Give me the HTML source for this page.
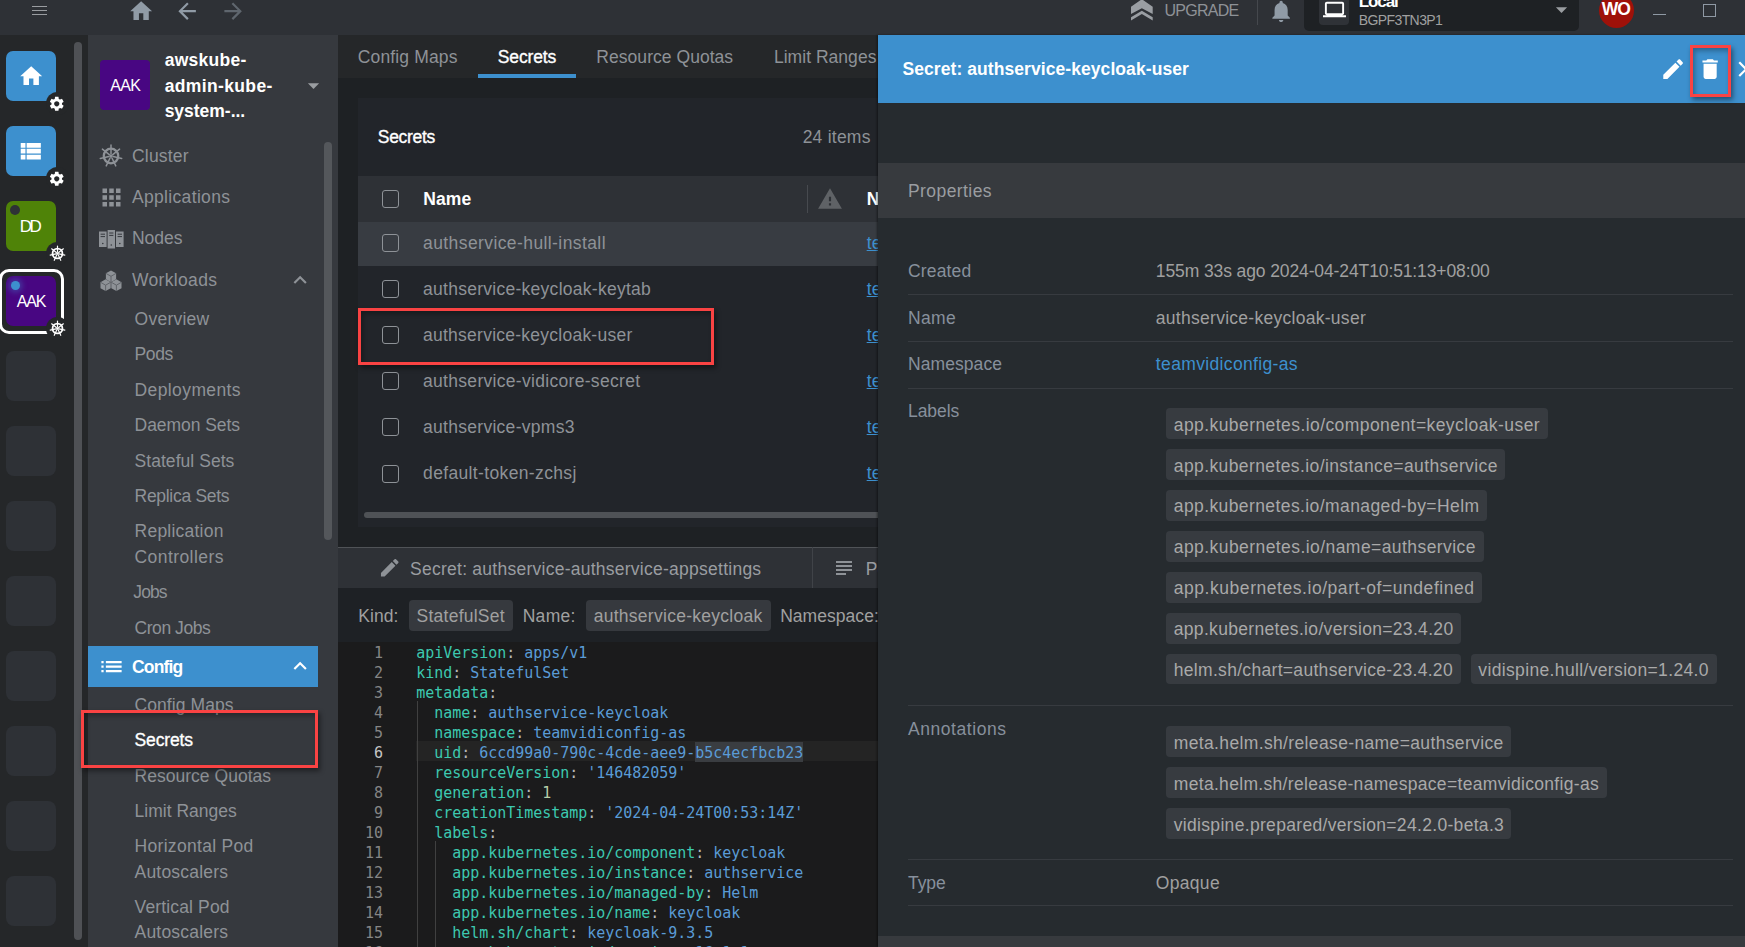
<!DOCTYPE html>
<html lang="en"><head><meta charset="utf-8"><title>Lens</title><style>
*{box-sizing:border-box;margin:0;padding:0}
html,body{width:1745px;height:947px;overflow:hidden;background:#1e2124}
body{position:relative;font-family:"Liberation Sans", sans-serif;font-size:17.5px;color:#8e9297}
.a{position:absolute;display:block}
.t{position:absolute;white-space:pre;display:block}
.m{font-family:"DejaVu Sans Mono", "Liberation Mono", monospace}
.box{position:absolute;overflow:hidden}
.cb{position:absolute;width:17px;height:18px;border:1.5px solid #8e9297;border-radius:3px}
.red{position:absolute;border:3px solid #fa4343;box-shadow:2px 3px 5px rgba(0,0,0,.45), inset 2px 3px 5px rgba(0,0,0,.3)}
.badge{position:absolute;height:30px;background:#373b40;border-radius:4px}
.hr{position:absolute;height:1px;background:#34383d}
.cell{position:absolute;left:6px;width:50px;height:50px;border-radius:7px;background:#2e3136}
</style></head><body><div class="a" style="left:0px;top:0px;width:1745px;height:35px;background:#2e3136;overflow:hidden"><div class="a" style="left:32px;top:5.6px;width:15px;height:1.4px;background:#9a9da1;"></div><div class="a" style="left:32px;top:9.9px;width:15px;height:1.4px;background:#9a9da1;"></div><div class="a" style="left:32px;top:14.1px;width:15px;height:1.4px;background:#9a9da1;"></div><svg class="a" style="left:127.8px;top:-2.3px;" width="26.25" height="26.25" viewBox="0 0 24 24"><path fill="#909ba6" d="M10 20v-6h4v6h5v-8h3L12 3 2 12h3v8z"/></svg><svg class="a" style="left:173.8px;top:-1.7px;" width="26.25" height="26.25" viewBox="0 0 24 24"><path fill="#909ba6" d="M20 11H7.83l5.59-5.59L12 4l-8 8 8 8 1.41-1.41L7.83 13H20v-2z"/></svg><svg class="a" style="left:219.9px;top:-1.7px;" width="26.25" height="26.25" viewBox="0 0 24 24"><path fill="#5f666e" d="M12 4l-1.41 1.41L16.17 11H4v2h12.17l-5.58 5.59L12 20l8-8z"/></svg><svg class="a" style="left:1131.3px;top:0" width="22" height="22" viewBox="0 0 22 22"><path d="M10.85 -0.8L21.7 6.7V13.9L10.85 8.3L0 13.9V6.7Z" fill="#9a9ea3"/><path d="M10.85 10.8L21.7 17.2V20.6L10.85 14L0 20.6V17.2Z" fill="#9a9ea3"/></svg><span class="t" style="left:1164.48px;top:-0.40px;font-size:16px;line-height:22px;color:#8e9297;letter-spacing:-0.728px;">UPGRADE</span><div class="a" style="left:1257px;top:0px;width:1px;height:25px;background:#45484d;"></div><svg class="a" style="left:1267.8px;top:-1.8px;" width="26.25" height="26.25" viewBox="0 0 24 24"><path fill="#909ba6" d="M12 22c1.1 0 2-.9 2-2h-4c0 1.1.89 2 2 2zm6-6v-5c0-3.07-1.64-5.64-4.5-6.32V4c0-.83-.67-1.5-1.5-1.5s-1.5.67-1.5 1.5v.68C7.63 5.36 6 7.92 6 11v5l-2 2v1h16v-1l-2-2z"/></svg><div class="a" style="left:1304px;top:-6px;width:274.7px;height:36.5px;background:#1e2124;border-radius:5px"></div><div class="a" style="left:1319px;top:-6px;width:30px;height:30.7px;background:#2f3237;border-radius:4px"></div><svg class="a" style="left:1323px;top:-2.5px;" width="23" height="23" viewBox="0 0 24 24"><path fill="#ffffff" d="M20 18c1.1 0 1.99-.9 1.99-2L22 6c0-1.1-.9-2-2-2H4c-1.1 0-2 .9-2 2v10c0 1.1.9 2 2 2H0v2h24v-2h-4zM4 6h16v10H4V6z"/></svg><span class="t" style="left:1358.66px;top:-10.00px;font-size:17px;line-height:24px;color:#fff;font-weight:700;letter-spacing:-1.059px;">Local</span><span class="t" style="left:1358.72px;top:10.00px;font-size:14px;line-height:20px;color:#a0a0a0;letter-spacing:-0.594px;">BGPF3TN3P1</span><svg class="a" style="left:1547.9px;top:-4px;" width="27" height="27" viewBox="0 0 24 24"><path fill="#9a9da1" d="M7 10l5 5 5-5z"/></svg><div class="a" style="left:1599px;top:-7.5px;width:35px;height:35px;background:#9f1109;border-radius:50%"></div><span class="t" style="left:1601.65px;top:-2.70px;font-size:17.5px;line-height:24px;color:#fff;font-weight:700;letter-spacing:-0.966px;">WO</span><div class="a" style="left:1653px;top:13.9px;width:13.2px;height:1.3px;background:#8f99a4;"></div><div class="a" style="left:1702.6px;top:4.2px;width:13.6px;height:12.8px;background:transparent;border:1.6px solid #8f99a4"></div></div><div class="a" style="left:0px;top:35px;width:88px;height:912px;background:#252729;overflow:hidden"><div class="a" style="left:6px;top:16px;width:50px;height:50px;background:#3d90ce;border-radius:7px"></div><svg class="a" style="left:17.7px;top:27.6px;" width="26.4" height="26.4" viewBox="0 0 24 24"><path fill="#fff" d="M10 20v-6h4v6h5v-8h3L12 3 2 12h3v8z"/></svg><div class="a" style="left:45.5px;top:57.0px;width:23px;height:23px;background:#252729;border-radius:50%"></div><svg class="a" style="left:48.25px;top:59.75px;" width="17.5" height="17.5" viewBox="0 0 24 24"><path fill="#fff" d="M19.14 12.94c.04-.3.06-.61.06-.94 0-.32-.02-.64-.07-.94l2.03-1.58c.18-.14.23-.41.12-.61l-1.92-3.32c-.12-.22-.37-.29-.59-.22l-2.39.96c-.5-.38-1.03-.7-1.62-.94l-.36-2.54c-.04-.24-.24-.41-.48-.41h-3.84c-.24 0-.43.17-.47.41l-.36 2.54c-.59.24-1.13.57-1.62.94l-2.39-.96c-.22-.08-.47 0-.59.22L2.74 8.87c-.12.21-.08.47.12.61l2.03 1.58c-.05.3-.09.63-.09.94s.02.64.07.94l-2.03 1.58c-.18.14-.23.41-.12.61l1.92 3.32c.12.22.37.29.59.22l2.39-.96c.5.38 1.03.7 1.62.94l.36 2.54c.05.24.24.41.48.41h3.84c.24 0 .44-.17.47-.41l.36-2.54c.59-.24 1.13-.56 1.62-.94l2.39.96c.22.08.47 0 .59-.22l1.92-3.32c.12-.22.07-.47-.12-.61l-2.01-1.58zM12 15.6c-1.98 0-3.6-1.62-3.6-3.6s1.62-3.6 3.6-3.6 3.6 1.62 3.6 3.6-1.62 3.6-3.6 3.6z"/></svg><div class="a" style="left:6px;top:91px;width:50px;height:50px;background:#3d90ce;border-radius:7px"></div><svg class="a" style="left:16.06px;top:101.80000000000001px;" width="28.4" height="28.4" viewBox="0 0 24 24"><path fill="#fff" d="M4 14h4v-4H4v4zm0 5h4v-4H4v4zM4 9h4V5H4v4zm5 5h12v-4H9v4zm0 5h12v-4H9v4zM9 5v4h12V5H9z"/></svg><div class="a" style="left:45.5px;top:132.0px;width:23px;height:23px;background:#252729;border-radius:50%"></div><svg class="a" style="left:48.25px;top:134.75px;" width="17.5" height="17.5" viewBox="0 0 24 24"><path fill="#fff" d="M19.14 12.94c.04-.3.06-.61.06-.94 0-.32-.02-.64-.07-.94l2.03-1.58c.18-.14.23-.41.12-.61l-1.92-3.32c-.12-.22-.37-.29-.59-.22l-2.39.96c-.5-.38-1.03-.7-1.62-.94l-.36-2.54c-.04-.24-.24-.41-.48-.41h-3.84c-.24 0-.43.17-.47.41l-.36 2.54c-.59.24-1.13.57-1.62.94l-2.39-.96c-.22-.08-.47 0-.59.22L2.74 8.87c-.12.21-.08.47.12.61l2.03 1.58c-.05.3-.09.63-.09.94s.02.64.07.94l-2.03 1.58c-.18.14-.23.41-.12.61l1.92 3.32c.12.22.37.29.59.22l2.39-.96c.5.38 1.03.7 1.62.94l.36 2.54c.05.24.24.41.48.41h3.84c.24 0 .44-.17.47-.41l.36-2.54c.59-.24 1.13-.56 1.62-.94l2.39.96c.22.08.47 0 .59-.22l1.92-3.32c.12-.22.07-.47-.12-.61l-2.01-1.58zM12 15.6c-1.98 0-3.6-1.62-3.6-3.6s1.62-3.6 3.6-3.6 3.6 1.62 3.6 3.6-1.62 3.6-3.6 3.6z"/></svg><div class="a" style="left:6px;top:166px;width:50px;height:50px;background:#4f8308;border-radius:7px"></div><div class="a" style="left:10px;top:170px;width:10px;height:10px;background:#2e3136;border-radius:50%"></div><span class="t" style="left:19.66px;top:179.50px;font-size:17px;line-height:24px;color:#fff;letter-spacing:-2.392px;">DD</span><div class="a" style="left:45.5px;top:207.0px;width:23px;height:23px;background:#252729;border-radius:50%"></div><svg class="a" style="left:47.5px;top:209.0px" width="19.0" height="19.0" viewBox="-9.5 -9.5 19.0 19.0" fill="none" stroke="#fff" stroke-width="1.2" stroke-linecap="round"><circle r="4.95" stroke-width="1.80"/><circle r="1.20" fill="#fff" stroke="none"/><path d="M0.00 -1.50L0.00 -7.50"/><path d="M1.17 -0.94L5.86 -4.68"/><path d="M1.46 0.33L7.31 1.67"/><path d="M0.65 1.35L3.25 6.76"/><path d="M-0.65 1.35L-3.25 6.76"/><path d="M-1.46 0.33L-7.31 1.67"/><path d="M-1.17 -0.94L-5.86 -4.68"/></svg><div class="a" style="left:-1.5px;top:233.5px;width:65.5px;height:65.5px;background:transparent;border:3.5px solid #fff;border-radius:10px"></div><div class="a" style="left:6px;top:241px;width:50px;height:50px;background:#480682;border-radius:7px"></div><div class="a" style="left:10.5px;top:245.5px;width:9px;height:9px;background:#3d90ce;border-radius:50%;box-shadow:0 0 6px 2px rgba(61,144,206,.45)"></div><span class="t" style="left:16.68px;top:255.50px;font-size:16px;line-height:22px;color:#fff;letter-spacing:-1.178px;">AAK</span><div class="a" style="left:45.5px;top:282.0px;width:23px;height:23px;background:#252729;border-radius:50%"></div><svg class="a" style="left:47.5px;top:284.0px" width="19.0" height="19.0" viewBox="-9.5 -9.5 19.0 19.0" fill="none" stroke="#fff" stroke-width="1.2" stroke-linecap="round"><circle r="4.95" stroke-width="1.80"/><circle r="1.20" fill="#fff" stroke="none"/><path d="M0.00 -1.50L0.00 -7.50"/><path d="M1.17 -0.94L5.86 -4.68"/><path d="M1.46 0.33L7.31 1.67"/><path d="M0.65 1.35L3.25 6.76"/><path d="M-0.65 1.35L-3.25 6.76"/><path d="M-1.46 0.33L-7.31 1.67"/><path d="M-1.17 -0.94L-5.86 -4.68"/></svg><div class="a" style="left:6px;top:316px;width:50px;height:50px;background:#2e3136;border-radius:8px"></div><div class="a" style="left:6px;top:391px;width:50px;height:50px;background:#2e3136;border-radius:8px"></div><div class="a" style="left:6px;top:466px;width:50px;height:50px;background:#2e3136;border-radius:8px"></div><div class="a" style="left:6px;top:541px;width:50px;height:50px;background:#2e3136;border-radius:8px"></div><div class="a" style="left:6px;top:616px;width:50px;height:50px;background:#2e3136;border-radius:8px"></div><div class="a" style="left:6px;top:691px;width:50px;height:50px;background:#2e3136;border-radius:8px"></div><div class="a" style="left:6px;top:766px;width:50px;height:50px;background:#2e3136;border-radius:8px"></div><div class="a" style="left:6px;top:841px;width:50px;height:50px;background:#2e3136;border-radius:8px"></div><div class="a" style="left:74px;top:7px;width:8px;height:898px;background:#4f5155;border-radius:4px"></div></div><div class="a" style="left:88px;top:35px;width:250px;height:912px;background:#36393e;overflow:hidden"><div class="a" style="left:12px;top:25px;width:50px;height:50px;background:#480682;border-radius:4px"></div><span class="t" style="left:22.28px;top:39.80px;font-size:16px;line-height:22px;color:#fff;letter-spacing:-0.728px;">AAK</span><span class="t" style="left:76.65px;top:13.00px;font-size:17.5px;line-height:24px;color:#fff;font-weight:700;letter-spacing:0.261px;">awskube-</span><span class="t" style="left:76.65px;top:38.50px;font-size:17.5px;line-height:24px;color:#fff;font-weight:700;letter-spacing:0.363px;">admin-kube-</span><span class="t" style="left:76.65px;top:64.00px;font-size:17.5px;line-height:24px;color:#fff;font-weight:700;letter-spacing:-0.018px;">system-...</span><svg class="a" style="left:211.60000000000002px;top:36.8px;" width="27" height="27" viewBox="0 0 24 24"><path fill="#9a9da1" d="M7 10l5 5 5-5z"/></svg><svg class="a" style="left:10px;top:108px" width="26" height="26" viewBox="-13 -13 26 26" fill="none" stroke="#8e9297" stroke-width="1.5" stroke-linecap="round"><circle r="7.26" stroke-width="2.25"/><circle r="1.76" fill="#8e9297" stroke="none"/><path d="M0.00 -2.20L0.00 -11.00"/><path d="M1.72 -1.37L8.60 -6.86"/><path d="M2.14 0.49L10.72 2.45"/><path d="M0.95 1.98L4.77 9.91"/><path d="M-0.95 1.98L-4.77 9.91"/><path d="M-2.14 0.49L-10.72 2.45"/><path d="M-1.72 -1.37L-8.60 -6.86"/></svg><span class="t" style="left:43.95px;top:109.00px;font-size:17.5px;line-height:24px;color:#8e9297;letter-spacing:0.206px;">Cluster</span><svg class="a" style="left:9.5px;top:148.5px;" width="27" height="27" viewBox="0 0 24 24"><path fill="#8e9297" d="M4 8h4V4H4v4zm6 12h4v-4h-4v4zm-6 0h4v-4H4v4zm0-6h4v-4H4v4zm6 0h4v-4h-4v4zm6-10v4h4V4h-4zm-6 4h4V4h-4v4zm6 6h4v-4h-4v4zm0 6h4v-4h-4v4z"/></svg><span class="t" style="left:43.95px;top:150.00px;font-size:17.5px;line-height:24px;color:#8e9297;letter-spacing:0.336px;">Applications</span><svg class="a" style="left:11px;top:194px" width="25" height="21" viewBox="0 0 25 21"><rect x="0" y="2.5" width="7.6" height="15.5" fill="#8e9297"/><rect x="8.6" y="1" width="7.4" height="18.5" fill="#8e9297"/><rect x="17" y="2.5" width="7.6" height="15.5" fill="#8e9297"/><path d="M1.6 5.2h4.4M1.6 7.6h4.4M10.2 4h4.2M10.2 6.4h4.2M18.6 5.2h4.4M18.6 7.6h4.4" stroke="#36393e" stroke-width="1"/><circle cx="3.8" cy="14.5" r=".8" fill="#36393e"/><circle cx="12.3" cy="16" r=".8" fill="#36393e"/><circle cx="20.8" cy="14.5" r=".8" fill="#36393e"/></svg><span class="t" style="left:43.95px;top:191.40px;font-size:17.5px;line-height:24px;color:#8e9297;letter-spacing:0.020px;">Nodes</span><svg class="a" style="left:10px;top:233px" width="26" height="25" viewBox="0 0 26 25"><polygon points="13.00,2.40 18.11,5.35 18.11,11.25 13.00,14.20 7.89,11.25 7.89,5.35" fill="#8e9297"/><path d="M13.00 8.30L18.11 5.35M13.00 8.30L7.89 5.35M13.00 8.30L13.00 14.20" stroke="#5b5f64" stroke-width="0.9" fill="none"/><polygon points="7.60,11.30 12.71,14.25 12.71,20.15 7.60,23.10 2.49,20.15 2.49,14.25" fill="#8e9297"/><path d="M7.60 17.20L12.71 14.25M7.60 17.20L2.49 14.25M7.60 17.20L7.60 23.10" stroke="#5b5f64" stroke-width="0.9" fill="none"/><polygon points="18.40,11.30 23.51,14.25 23.51,20.15 18.40,23.10 13.29,20.15 13.29,14.25" fill="#8e9297"/><path d="M18.40 17.20L23.51 14.25M18.40 17.20L13.29 14.25M18.40 17.20L18.40 23.10" stroke="#5b5f64" stroke-width="0.9" fill="none"/></svg><span class="t" style="left:43.95px;top:232.60px;font-size:17.5px;line-height:24px;color:#8e9297;letter-spacing:0.339px;">Workloads</span><svg class="a" style="left:198.89999999999998px;top:231.89999999999998px;" width="26.25" height="26.25" viewBox="0 0 24 24"><path fill="#8e9297" d="M7.41 15.41L12 10.83l4.59 4.58L18 14l-6-6-6 6z"/></svg><span class="t" style="left:46.55px;top:271.90px;font-size:17.5px;line-height:24px;color:#8e9297;letter-spacing:0.248px;">Overview</span><span class="t" style="left:46.55px;top:307.30px;font-size:17.5px;line-height:24px;color:#8e9297;letter-spacing:-0.405px;">Pods</span><span class="t" style="left:46.55px;top:342.70px;font-size:17.5px;line-height:24px;color:#8e9297;letter-spacing:0.393px;">Deployments</span><span class="t" style="left:46.55px;top:378.10px;font-size:17.5px;line-height:24px;color:#8e9297;letter-spacing:-0.046px;">Daemon Sets</span><span class="t" style="left:46.55px;top:413.60px;font-size:17.5px;line-height:24px;color:#8e9297;letter-spacing:0.045px;">Stateful Sets</span><span class="t" style="left:46.55px;top:449.00px;font-size:17.5px;line-height:24px;color:#8e9297;letter-spacing:-0.298px;">Replica Sets</span><span class="t" style="left:46.55px;top:484.40px;font-size:17.5px;line-height:24px;color:#8e9297;letter-spacing:0.230px;">Replication</span><span class="t" style="left:46.55px;top:509.60px;font-size:17.5px;line-height:24px;color:#8e9297;letter-spacing:0.425px;">Controllers</span><span class="t" style="left:45.25px;top:545.10px;font-size:17.5px;line-height:24px;color:#8e9297;letter-spacing:-0.865px;">Jobs</span><span class="t" style="left:46.55px;top:580.50px;font-size:17.5px;line-height:24px;color:#8e9297;letter-spacing:-0.449px;">Cron Jobs</span><div class="a" style="left:0px;top:611px;width:230px;height:41px;background:#3d90ce;"></div><svg class="a" style="left:9.5px;top:617.6px;" width="27" height="27" viewBox="0 0 24 24"><path fill="#fff" d="M3 13h2v-2H3v2zm0 4h2v-2H3v2zm0-8h2V7H3v2zm4 4h14v-2H7v2zm0 4h14v-2H7v2zM7 7v2h14V7H7z"/></svg><span class="t" style="left:44.05px;top:619.80px;font-size:17.5px;line-height:24px;color:#fff;font-weight:700;letter-spacing:-0.866px;">Config</span><svg class="a" style="left:198.89999999999998px;top:618.25px;" width="26.25" height="26.25" viewBox="0 0 24 24"><path fill="#fff" d="M7.41 15.41L12 10.83l4.59 4.58L18 14l-6-6-6 6z"/></svg><span class="t" style="left:46.55px;top:657.60px;font-size:17.5px;line-height:24px;color:#8e9297;letter-spacing:0.072px;">Config Maps</span><span class="t" style="left:46.55px;top:693.00px;font-size:17.5px;line-height:24px;color:#fff;letter-spacing:-0.142px;-webkit-text-stroke:.35px #fff;">Secrets</span><span class="t" style="left:46.55px;top:728.50px;font-size:17.5px;line-height:24px;color:#8e9297;letter-spacing:0.021px;">Resource Quotas</span><span class="t" style="left:46.55px;top:763.90px;font-size:17.5px;line-height:24px;color:#8e9297;letter-spacing:0.012px;">Limit Ranges</span><span class="t" style="left:46.55px;top:799.30px;font-size:17.5px;line-height:24px;color:#8e9297;letter-spacing:0.306px;">Horizontal Pod</span><span class="t" style="left:46.55px;top:824.50px;font-size:17.5px;line-height:24px;color:#8e9297;letter-spacing:0.194px;">Autoscalers</span><span class="t" style="left:46.55px;top:860.00px;font-size:17.5px;line-height:24px;color:#8e9297;letter-spacing:0.144px;">Vertical Pod</span><span class="t" style="left:46.55px;top:885.20px;font-size:17.5px;line-height:24px;color:#8e9297;letter-spacing:0.194px;">Autoscalers</span><div class="a" style="left:236px;top:107px;width:7.5px;height:398px;background:#54575b;border-radius:4px"></div></div><div class="a" style="left:338px;top:35px;width:540px;height:912px;background:#1e2124;overflow:hidden"><div class="a" style="left:0px;top:0px;width:540px;height:43px;background:#252729;"></div><span class="t" style="left:19.85px;top:9.70px;font-size:17.5px;line-height:24px;color:#8e9297;letter-spacing:0.133px;">Config Maps</span><span class="t" style="left:159.85px;top:9.70px;font-size:17.5px;line-height:24px;color:#fff;letter-spacing:-0.142px;-webkit-text-stroke:.35px #fff;">Secrets</span><span class="t" style="left:258.35px;top:9.70px;font-size:17.5px;line-height:24px;color:#8e9297;letter-spacing:0.042px;">Resource Quotas</span><span class="t" style="left:435.95px;top:9.70px;font-size:17.5px;line-height:24px;color:#8e9297;letter-spacing:0.030px;">Limit Ranges</span><div class="a" style="left:140px;top:39px;width:98px;height:4px;background:#3d90ce;"></div><div class="a" style="left:20px;top:63px;width:520px;height:429px;background:#22252a;"></div><span class="t" style="left:39.75px;top:89.50px;font-size:17.5px;line-height:24px;color:#fff;letter-spacing:-0.292px;-webkit-text-stroke:.35px #fff;">Secrets</span><span class="t" style="left:464.65px;top:89.50px;font-size:17.5px;line-height:24px;color:#8e9297;letter-spacing:0.233px;">24 items</span><div class="a" style="left:20px;top:141px;width:520px;height:46px;background:#2e3136;"></div><div class="a" style="left:20px;top:187px;width:520px;height:44px;background:#383c42;"></div><div class="cb" style="left:44px;top:155px"></div><div class="cb" style="left:44px;top:199px"></div><div class="cb" style="left:44px;top:245.10000000000002px"></div><div class="cb" style="left:44px;top:291.2px"></div><div class="cb" style="left:44px;top:337.3px"></div><div class="cb" style="left:44px;top:383.4px"></div><div class="cb" style="left:44px;top:429.5px"></div><span class="t" style="left:85.35px;top:152.00px;font-size:17.5px;line-height:24px;color:#fff;font-weight:700;letter-spacing:0.034px;">Name</span><div class="a" style="left:469px;top:150px;width:1px;height:27.5px;background:#474a4f;"></div><svg class="a" style="left:478.70000000000005px;top:150.7px;" width="26" height="26" viewBox="0 0 24 24"><path fill="#5f6266" d="M1 21h22L12 2 1 21zm12-3h-2v-2h2v2zm0-4h-2v-4h2v4z"/></svg><span class="t" style="left:528.65px;top:152.00px;font-size:17.5px;line-height:24px;color:#fff;font-weight:700;letter-spacing:0.300px;">Namespace</span><span class="t" style="left:85.05px;top:195.60px;font-size:17.5px;line-height:24px;color:#8e9297;letter-spacing:0.406px;">authservice-hull-install</span><span class="t" style="left:528.65px;top:195.60px;font-size:17.5px;line-height:24px;color:#3d90ce;letter-spacing:0.300px;text-decoration:underline;">teamvidiconfig-as</span><span class="t" style="left:85.05px;top:241.70px;font-size:17.5px;line-height:24px;color:#8e9297;letter-spacing:0.268px;">authservice-keycloak-keytab</span><span class="t" style="left:528.65px;top:241.70px;font-size:17.5px;line-height:24px;color:#3d90ce;letter-spacing:0.300px;text-decoration:underline;">teamvidiconfig-as</span><span class="t" style="left:85.05px;top:287.80px;font-size:17.5px;line-height:24px;color:#8e9297;letter-spacing:0.246px;">authservice-keycloak-user</span><span class="t" style="left:528.65px;top:287.80px;font-size:17.5px;line-height:24px;color:#3d90ce;letter-spacing:0.300px;text-decoration:underline;">teamvidiconfig-as</span><span class="t" style="left:85.05px;top:333.90px;font-size:17.5px;line-height:24px;color:#8e9297;letter-spacing:0.303px;">authservice-vidicore-secret</span><span class="t" style="left:528.65px;top:333.90px;font-size:17.5px;line-height:24px;color:#3d90ce;letter-spacing:0.300px;text-decoration:underline;">teamvidiconfig-as</span><span class="t" style="left:85.05px;top:380.00px;font-size:17.5px;line-height:24px;color:#8e9297;letter-spacing:0.281px;">authservice-vpms3</span><span class="t" style="left:528.65px;top:380.00px;font-size:17.5px;line-height:24px;color:#3d90ce;letter-spacing:0.300px;text-decoration:underline;">teamvidiconfig-as</span><span class="t" style="left:85.05px;top:426.10px;font-size:17.5px;line-height:24px;color:#8e9297;letter-spacing:0.355px;">default-token-zchsj</span><span class="t" style="left:528.65px;top:426.10px;font-size:17.5px;line-height:24px;color:#3d90ce;letter-spacing:0.300px;text-decoration:underline;">teamvidiconfig-as</span><div class="a" style="left:26px;top:477px;width:520px;height:6px;background:#4f5256;border-radius:3px"></div><div class="a" style="left:0px;top:511.6px;width:540px;height:1px;background:#505357;"></div><div class="a" style="left:0px;top:512.6px;width:540px;height:40.4px;background:#2e3136;"></div><svg class="a" style="left:39.60000000000002px;top:521.4px;" width="23.5" height="23.5" viewBox="0 0 24 24"><path fill="#8e9297" d="M3 17.25V21h3.75L17.81 9.94l-3.75-3.75L3 17.25zM20.71 7.04c.39-.39.39-1.02 0-1.41l-2.34-2.34c-.39-.39-1.02-.39-1.41 0l-1.83 1.83 3.75 3.75 1.83-1.83z"/></svg><span class="t" style="left:72.05px;top:521.50px;font-size:17.5px;line-height:24px;color:#9a9da1;letter-spacing:0.253px;">Secret: authservice-authservice-appsettings</span><div class="a" style="left:474px;top:512px;width:1px;height:41px;background:#404348;"></div><svg class="a" style="left:494.4px;top:521px;" width="24" height="24" viewBox="0 0 24 24"><path fill="#8e9297" d="M14 17H4v2h10v-2zm6-8H4v2h16V9zM4 15h16v-2H4v2zM4 5v2h16V5H4z"/></svg><span class="t" style="left:527.65px;top:521.50px;font-size:17.5px;line-height:24px;color:#9a9da1;letter-spacing:0.300px;">Pod: authservice</span><div class="a" style="left:0px;top:553px;width:540px;height:54px;background:#1e2125;"></div><span class="t" style="left:20.15px;top:568.50px;font-size:17.5px;line-height:24px;color:#a0a0a0;letter-spacing:0.096px;">Kind:</span><div class="a" style="left:71px;top:565px;width:103.8px;height:31px;background:#36393e;border-radius:4px"></div><span class="t" style="left:78.55px;top:569.00px;font-size:17.5px;line-height:24px;color:#a0a0a0;letter-spacing:0.245px;">StatefulSet</span><span class="t" style="left:184.65px;top:568.50px;font-size:17.5px;line-height:24px;color:#a0a0a0;letter-spacing:0.307px;">Name:</span><div class="a" style="left:247.79999999999995px;top:565px;width:184.8px;height:31px;background:#36393e;border-radius:4px"></div><span class="t" style="left:255.65px;top:569.00px;font-size:17.5px;line-height:24px;color:#a0a0a0;letter-spacing:0.277px;">authservice-keycloak</span><span class="t" style="left:442.15px;top:568.50px;font-size:17.5px;line-height:24px;color:#a0a0a0;letter-spacing:0.047px;">Namespace:</span><div class="a" style="left:0px;top:607px;width:540px;height:306px;background:#1b1b1c;"></div><div class="a" style="left:78px;top:706px;width:470px;height:20px;background:#242424;"></div><div class="a" style="left:357px;top:707px;width:108px;height:20px;background:#3a3d41;"></div><div class="a" style="left:79px;top:666px;width:1px;height:250px;background:#404040;"></div><div class="a" style="left:97px;top:806px;width:1px;height:110px;background:#404040;"></div><span class="t m" style="left:36.00px;top:608.00px;font-size:15px;line-height:20px;color:#858585;letter-spacing:-0.030px;">1</span><span class="t m" style="left:78.30px;top:608.00px;font-size:15px;line-height:20px;color:#3dc9b0;letter-spacing:-0.030px;">apiVersion</span><span class="t m" style="left:168.30px;top:608.00px;font-size:15px;line-height:20px;color:#b8b8b8;letter-spacing:-0.030px;">: </span><span class="t m" style="left:186.30px;top:608.00px;font-size:15px;line-height:20px;color:#5a9bd6;letter-spacing:-0.030px;">apps/v1</span><span class="t m" style="left:36.00px;top:628.00px;font-size:15px;line-height:20px;color:#858585;letter-spacing:-0.030px;">2</span><span class="t m" style="left:78.30px;top:628.00px;font-size:15px;line-height:20px;color:#3dc9b0;letter-spacing:-0.030px;">kind</span><span class="t m" style="left:114.30px;top:628.00px;font-size:15px;line-height:20px;color:#b8b8b8;letter-spacing:-0.030px;">: </span><span class="t m" style="left:132.30px;top:628.00px;font-size:15px;line-height:20px;color:#5a9bd6;letter-spacing:-0.030px;">StatefulSet</span><span class="t m" style="left:36.00px;top:648.00px;font-size:15px;line-height:20px;color:#858585;letter-spacing:-0.030px;">3</span><span class="t m" style="left:78.30px;top:648.00px;font-size:15px;line-height:20px;color:#3dc9b0;letter-spacing:-0.030px;">metadata</span><span class="t m" style="left:150.30px;top:648.00px;font-size:15px;line-height:20px;color:#b8b8b8;letter-spacing:-0.030px;">:</span><span class="t m" style="left:36.00px;top:668.00px;font-size:15px;line-height:20px;color:#858585;letter-spacing:-0.030px;">4</span><span class="t m" style="left:96.30px;top:668.00px;font-size:15px;line-height:20px;color:#3dc9b0;letter-spacing:-0.030px;">name</span><span class="t m" style="left:132.30px;top:668.00px;font-size:15px;line-height:20px;color:#b8b8b8;letter-spacing:-0.030px;">: </span><span class="t m" style="left:150.30px;top:668.00px;font-size:15px;line-height:20px;color:#5a9bd6;letter-spacing:-0.030px;">authservice-keycloak</span><span class="t m" style="left:36.00px;top:688.00px;font-size:15px;line-height:20px;color:#858585;letter-spacing:-0.030px;">5</span><span class="t m" style="left:96.30px;top:688.00px;font-size:15px;line-height:20px;color:#3dc9b0;letter-spacing:-0.030px;">namespace</span><span class="t m" style="left:177.30px;top:688.00px;font-size:15px;line-height:20px;color:#b8b8b8;letter-spacing:-0.030px;">: </span><span class="t m" style="left:195.30px;top:688.00px;font-size:15px;line-height:20px;color:#5a9bd6;letter-spacing:-0.030px;">teamvidiconfig-as</span><span class="t m" style="left:36.00px;top:708.00px;font-size:15px;line-height:20px;color:#c6c6c6;letter-spacing:-0.030px;">6</span><span class="t m" style="left:96.30px;top:708.00px;font-size:15px;line-height:20px;color:#3dc9b0;letter-spacing:-0.030px;">uid</span><span class="t m" style="left:123.30px;top:708.00px;font-size:15px;line-height:20px;color:#b8b8b8;letter-spacing:-0.030px;">: </span><span class="t m" style="left:141.30px;top:708.00px;font-size:15px;line-height:20px;color:#5a9bd6;letter-spacing:-0.030px;">6ccd99a0-790c-4cde-aee9-b5c4ecfbcb23</span><span class="t m" style="left:36.00px;top:728.00px;font-size:15px;line-height:20px;color:#858585;letter-spacing:-0.030px;">7</span><span class="t m" style="left:96.30px;top:728.00px;font-size:15px;line-height:20px;color:#3dc9b0;letter-spacing:-0.030px;">resourceVersion</span><span class="t m" style="left:231.30px;top:728.00px;font-size:15px;line-height:20px;color:#b8b8b8;letter-spacing:-0.030px;">: </span><span class="t m" style="left:249.30px;top:728.00px;font-size:15px;line-height:20px;color:#5a9bd6;letter-spacing:-0.030px;">&#x27;146482059&#x27;</span><span class="t m" style="left:36.00px;top:748.00px;font-size:15px;line-height:20px;color:#858585;letter-spacing:-0.030px;">8</span><span class="t m" style="left:96.30px;top:748.00px;font-size:15px;line-height:20px;color:#3dc9b0;letter-spacing:-0.030px;">generation</span><span class="t m" style="left:186.30px;top:748.00px;font-size:15px;line-height:20px;color:#b8b8b8;letter-spacing:-0.030px;">: </span><span class="t m" style="left:204.30px;top:748.00px;font-size:15px;line-height:20px;color:#b5cea8;letter-spacing:-0.030px;">1</span><span class="t m" style="left:36.00px;top:768.00px;font-size:15px;line-height:20px;color:#858585;letter-spacing:-0.030px;">9</span><span class="t m" style="left:96.30px;top:768.00px;font-size:15px;line-height:20px;color:#3dc9b0;letter-spacing:-0.030px;">creationTimestamp</span><span class="t m" style="left:249.30px;top:768.00px;font-size:15px;line-height:20px;color:#b8b8b8;letter-spacing:-0.030px;">: </span><span class="t m" style="left:267.30px;top:768.00px;font-size:15px;line-height:20px;color:#5a9bd6;letter-spacing:-0.030px;">&#x27;2024-04-24T00:53:14Z&#x27;</span><span class="t m" style="left:27.00px;top:788.00px;font-size:15px;line-height:20px;color:#858585;letter-spacing:-0.030px;">10</span><span class="t m" style="left:96.30px;top:788.00px;font-size:15px;line-height:20px;color:#3dc9b0;letter-spacing:-0.030px;">labels</span><span class="t m" style="left:150.30px;top:788.00px;font-size:15px;line-height:20px;color:#b8b8b8;letter-spacing:-0.030px;">:</span><span class="t m" style="left:27.00px;top:808.00px;font-size:15px;line-height:20px;color:#858585;letter-spacing:-0.030px;">11</span><span class="t m" style="left:114.30px;top:808.00px;font-size:15px;line-height:20px;color:#3dc9b0;letter-spacing:-0.030px;">app.kubernetes.io/component</span><span class="t m" style="left:357.30px;top:808.00px;font-size:15px;line-height:20px;color:#b8b8b8;letter-spacing:-0.030px;">: </span><span class="t m" style="left:375.30px;top:808.00px;font-size:15px;line-height:20px;color:#5a9bd6;letter-spacing:-0.030px;">keycloak</span><span class="t m" style="left:27.00px;top:828.00px;font-size:15px;line-height:20px;color:#858585;letter-spacing:-0.030px;">12</span><span class="t m" style="left:114.30px;top:828.00px;font-size:15px;line-height:20px;color:#3dc9b0;letter-spacing:-0.030px;">app.kubernetes.io/instance</span><span class="t m" style="left:348.30px;top:828.00px;font-size:15px;line-height:20px;color:#b8b8b8;letter-spacing:-0.030px;">: </span><span class="t m" style="left:366.30px;top:828.00px;font-size:15px;line-height:20px;color:#5a9bd6;letter-spacing:-0.030px;">authservice</span><span class="t m" style="left:27.00px;top:848.00px;font-size:15px;line-height:20px;color:#858585;letter-spacing:-0.030px;">13</span><span class="t m" style="left:114.30px;top:848.00px;font-size:15px;line-height:20px;color:#3dc9b0;letter-spacing:-0.030px;">app.kubernetes.io/managed-by</span><span class="t m" style="left:366.30px;top:848.00px;font-size:15px;line-height:20px;color:#b8b8b8;letter-spacing:-0.030px;">: </span><span class="t m" style="left:384.30px;top:848.00px;font-size:15px;line-height:20px;color:#5a9bd6;letter-spacing:-0.030px;">Helm</span><span class="t m" style="left:27.00px;top:868.00px;font-size:15px;line-height:20px;color:#858585;letter-spacing:-0.030px;">14</span><span class="t m" style="left:114.30px;top:868.00px;font-size:15px;line-height:20px;color:#3dc9b0;letter-spacing:-0.030px;">app.kubernetes.io/name</span><span class="t m" style="left:312.30px;top:868.00px;font-size:15px;line-height:20px;color:#b8b8b8;letter-spacing:-0.030px;">: </span><span class="t m" style="left:330.30px;top:868.00px;font-size:15px;line-height:20px;color:#5a9bd6;letter-spacing:-0.030px;">keycloak</span><span class="t m" style="left:27.00px;top:888.00px;font-size:15px;line-height:20px;color:#858585;letter-spacing:-0.030px;">15</span><span class="t m" style="left:114.30px;top:888.00px;font-size:15px;line-height:20px;color:#3dc9b0;letter-spacing:-0.030px;">helm.sh/chart</span><span class="t m" style="left:231.30px;top:888.00px;font-size:15px;line-height:20px;color:#b8b8b8;letter-spacing:-0.030px;">: </span><span class="t m" style="left:249.30px;top:888.00px;font-size:15px;line-height:20px;color:#5a9bd6;letter-spacing:-0.030px;">keycloak-9.3.5</span><span class="t m" style="left:27.00px;top:908.00px;font-size:15px;line-height:20px;color:#858585;letter-spacing:-0.030px;">16</span><span class="t m" style="left:114.30px;top:908.00px;font-size:15px;line-height:20px;color:#3dc9b0;letter-spacing:-0.030px;">app.kubernetes.io/version</span><span class="t m" style="left:339.30px;top:908.00px;font-size:15px;line-height:20px;color:#b8b8b8;letter-spacing:-0.030px;">: </span><span class="t m" style="left:357.30px;top:908.00px;font-size:15px;line-height:20px;color:#5a9bd6;letter-spacing:-0.030px;">16.1.1</span></div><div class="a" style="left:878px;top:35px;width:867px;height:912px;background:#262b2f;overflow:hidden;box-shadow:-1px 0 2px rgba(0,0,0,.45)"><div class="a" style="left:0px;top:0px;width:867px;height:68px;background:#3d90ce;"></div><span class="t" style="left:24.45px;top:22.00px;font-size:17.5px;line-height:24px;color:#fff;font-weight:700;letter-spacing:0.073px;">Secret: authservice-keycloak-user</span><svg class="a" style="left:781.7px;top:20.6px;" width="26.25" height="26.25" viewBox="0 0 24 24"><path fill="#fff" d="M3 17.25V21h3.75L17.81 9.94l-3.75-3.75L3 17.25zM20.71 7.04c.39-.39.39-1.02 0-1.41l-2.34-2.34c-.39-.39-1.02-.39-1.41 0l-1.83 1.83 3.75 3.75 1.83-1.83z"/></svg><svg class="a" style="left:818.5px;top:20.6px;" width="26.25" height="26.25" viewBox="0 0 24 24"><path fill="#fff" d="M6 19c0 1.1.9 2 2 2h8c1.1 0 2-.9 2-2V7H6v12zM19 4h-3.5l-1-1h-5l-1 1H5v2h14V4z"/></svg><svg class="a" style="left:855.3px;top:20.6px;" width="26.25" height="26.25" viewBox="0 0 24 24"><path fill="#fff" d="M19 6.41L17.59 5 12 10.59 6.41 5 5 6.41 10.59 12 5 17.59 6.41 19 12 13.41 17.59 19 19 17.59 13.41 12z"/></svg><div class="a" style="left:0px;top:127.5px;width:867px;height:55.2px;background:#373a3e;"></div><span class="t" style="left:29.95px;top:144.00px;font-size:17.5px;line-height:24px;color:#9a9da1;letter-spacing:0.434px;">Properties</span><span class="t" style="left:29.95px;top:224.00px;font-size:17.5px;line-height:24px;color:#87909c;letter-spacing:0.168px;">Created</span><span class="t" style="left:277.85px;top:224.00px;font-size:17.5px;line-height:24px;color:#a0a0a0;letter-spacing:-0.112px;">155m 33s ago 2024-04-24T10:51:13+08:00</span><div class="a" style="left:30px;top:259px;width:825px;height:1px;background:#373b40;"></div><span class="t" style="left:29.95px;top:270.50px;font-size:17.5px;line-height:24px;color:#87909c;letter-spacing:0.396px;">Name</span><span class="t" style="left:277.85px;top:270.50px;font-size:17.5px;line-height:24px;color:#a0a0a0;letter-spacing:0.275px;">authservice-keycloak-user</span><div class="a" style="left:30px;top:305.5px;width:825px;height:1px;background:#373b40;"></div><span class="t" style="left:29.95px;top:317.00px;font-size:17.5px;line-height:24px;color:#87909c;letter-spacing:0.086px;">Namespace</span><span class="t" style="left:277.85px;top:317.00px;font-size:17.5px;line-height:24px;color:#3d90ce;letter-spacing:0.350px;">teamvidiconfig-as</span><div class="a" style="left:30px;top:352.5px;width:825px;height:1px;background:#373b40;"></div><span class="t" style="left:29.95px;top:363.60px;font-size:17.5px;line-height:24px;color:#87909c;letter-spacing:-0.041px;">Labels</span><div class="a" style="left:288.20000000000005px;top:373.3px;width:381.5px;height:30.4px;background:#373b40;border-radius:4px"></div><span class="t" style="left:295.75px;top:377.50px;font-size:17.5px;line-height:24px;color:#a9a9a9;letter-spacing:0.428px;">app.kubernetes.io/component=keycloak-user</span><div class="a" style="left:288.20000000000005px;top:414.3px;width:339.29999999999995px;height:30.4px;background:#373b40;border-radius:4px"></div><span class="t" style="left:295.75px;top:418.50px;font-size:17.5px;line-height:24px;color:#a9a9a9;letter-spacing:0.400px;">app.kubernetes.io/instance=authservice</span><div class="a" style="left:288.20000000000005px;top:455.2px;width:320.39999999999986px;height:30.4px;background:#373b40;border-radius:4px"></div><span class="t" style="left:295.75px;top:459.40px;font-size:17.5px;line-height:24px;color:#a9a9a9;letter-spacing:0.404px;">app.kubernetes.io/managed-by=Helm</span><div class="a" style="left:288.20000000000005px;top:496.20000000000005px;width:317.39999999999986px;height:30.4px;background:#373b40;border-radius:4px"></div><span class="t" style="left:295.75px;top:500.40px;font-size:17.5px;line-height:24px;color:#a9a9a9;letter-spacing:0.433px;">app.kubernetes.io/name=authservice</span><div class="a" style="left:288.20000000000005px;top:537.2px;width:315.5px;height:30.4px;background:#373b40;border-radius:4px"></div><span class="t" style="left:295.75px;top:541.40px;font-size:17.5px;line-height:24px;color:#a9a9a9;letter-spacing:0.547px;">app.kubernetes.io/part-of=undefined</span><div class="a" style="left:288.20000000000005px;top:578.2px;width:294.5999999999999px;height:30.4px;background:#373b40;border-radius:4px"></div><span class="t" style="left:295.75px;top:582.40px;font-size:17.5px;line-height:24px;color:#a9a9a9;letter-spacing:0.324px;">app.kubernetes.io/version=23.4.20</span><div class="a" style="left:288.20000000000005px;top:619px;width:294.5999999999999px;height:30.4px;background:#373b40;border-radius:4px"></div><span class="t" style="left:295.75px;top:623.20px;font-size:17.5px;line-height:24px;color:#a9a9a9;letter-spacing:0.310px;">helm.sh/chart=authservice-23.4.20</span><div class="a" style="left:592.7px;top:619px;width:246.0px;height:30.4px;background:#373b40;border-radius:4px"></div><span class="t" style="left:600.35px;top:623.20px;font-size:17.5px;line-height:24px;color:#a9a9a9;letter-spacing:0.351px;">vidispine.hull/version=1.24.0</span><div class="a" style="left:30px;top:670px;width:825px;height:1px;background:#373b40;"></div><span class="t" style="left:29.95px;top:682.00px;font-size:17.5px;line-height:24px;color:#87909c;letter-spacing:0.564px;">Annotations</span><div class="a" style="left:288.20000000000005px;top:691.4px;width:345.29999999999995px;height:30.4px;background:#373b40;border-radius:4px"></div><span class="t" style="left:295.75px;top:695.60px;font-size:17.5px;line-height:24px;color:#a9a9a9;letter-spacing:0.360px;">meta.helm.sh/release-name=authservice</span><div class="a" style="left:288.20000000000005px;top:732.3px;width:440.70000000000005px;height:30.4px;background:#373b40;border-radius:4px"></div><span class="t" style="left:295.75px;top:736.50px;font-size:17.5px;line-height:24px;color:#a9a9a9;letter-spacing:0.319px;">meta.helm.sh/release-namespace=teamvidiconfig-as</span><div class="a" style="left:288.20000000000005px;top:773.3px;width:345.29999999999995px;height:30.4px;background:#373b40;border-radius:4px"></div><span class="t" style="left:295.75px;top:777.50px;font-size:17.5px;line-height:24px;color:#a9a9a9;letter-spacing:0.319px;">vidispine.prepared/version=24.2.0-beta.3</span><div class="a" style="left:30px;top:824px;width:825px;height:1px;background:#373b40;"></div><span class="t" style="left:29.95px;top:836.00px;font-size:17.5px;line-height:24px;color:#87909c;letter-spacing:-0.026px;">Type</span><span class="t" style="left:277.85px;top:836.00px;font-size:17.5px;line-height:24px;color:#a0a0a0;letter-spacing:0.299px;">Opaque</span><div class="a" style="left:30px;top:870px;width:825px;height:1px;background:#373b40;"></div><div class="a" style="left:0px;top:900.5px;width:867px;height:20px;background:#373a3e;"></div></div><div class="red" style="left:81px;top:710px;width:237px;height:58px"></div><div class="red" style="left:358px;top:308px;width:356.2px;height:57px"></div><div class="red" style="left:1690px;top:45px;width:41.2px;height:52px"></div></body></html>
